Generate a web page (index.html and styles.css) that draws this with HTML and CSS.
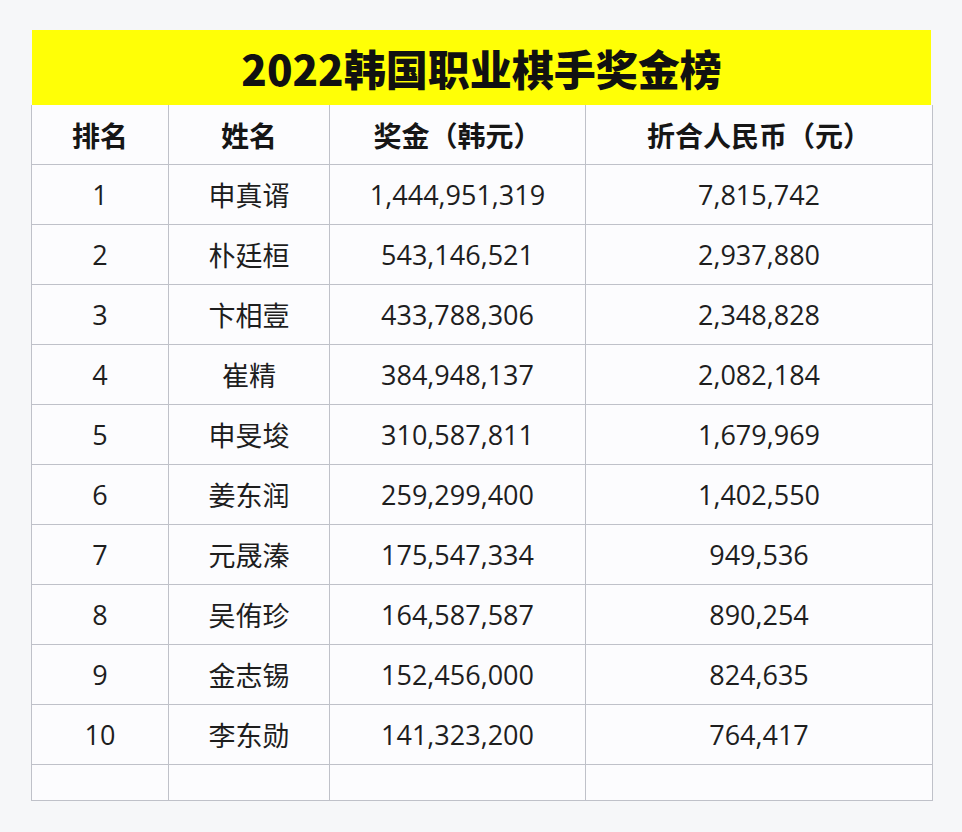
FILE: index.html
```html
<!DOCTYPE html>
<html lang="zh-CN">
<head>
<meta charset="utf-8">
<title>2022韩国职业棋手奖金榜</title>
<link rel="stylesheet" href="styles.css">
</head>
<body>
<div class="page">
  <div class="board">
    <div class="title">2022韩国职业棋手奖金榜</div>
    <table class="rank">
      <colgroup>
        <col class="c1"><col class="c2"><col class="c3"><col class="c4">
      </colgroup>
      <thead>
        <tr><th>排名</th><th>姓名</th><th>奖金（韩元）</th><th>折合人民币（元）</th></tr>
      </thead>
      <tbody>
        <tr><td>1</td><td>申真谞</td><td>1,444,951,319</td><td>7,815,742</td></tr>
        <tr><td>2</td><td>朴廷桓</td><td>543,146,521</td><td>2,937,880</td></tr>
        <tr><td>3</td><td>卞相壹</td><td>433,788,306</td><td>2,348,828</td></tr>
        <tr><td>4</td><td>崔精</td><td>384,948,137</td><td>2,082,184</td></tr>
        <tr><td>5</td><td>申旻埈</td><td>310,587,811</td><td>1,679,969</td></tr>
        <tr><td>6</td><td>姜东润</td><td>259,299,400</td><td>1,402,550</td></tr>
        <tr><td>7</td><td>元晟溱</td><td>175,547,334</td><td>949,536</td></tr>
        <tr><td>8</td><td>吴侑珍</td><td>164,587,587</td><td>890,254</td></tr>
        <tr><td>9</td><td>金志锡</td><td>152,456,000</td><td>824,635</td></tr>
        <tr><td>10</td><td>李东勋</td><td>141,323,200</td><td>764,417</td></tr>
        <tr class="empty"><td></td><td></td><td></td><td></td></tr>
      </tbody>
    </table>
  </div>
</div>
</body>
</html>
```

FILE: styles.css
```css
html, body {
  margin: 0;
  padding: 0;
  background: #f6f7f9;
}

.page {
  width: 962px;
  height: 832px;
  padding: 30px 0 0 31px;
  box-sizing: border-box;
  font-family: "Open Sans", "Noto Sans CJK SC", sans-serif;
  color: #1c1c1c;
}

.board {
  width: 901px;
}

.title {
  height: 75px;
  margin-left: 1px;
  margin-right: 1px;
  background: #ffff06;
  display: flex;
  align-items: center;
  justify-content: center;
  font-family: "Noto Sans CJK SC", sans-serif;
  font-weight: 900;
  font-size: 42px;
  color: #111;
}

.rank {
  width: 901px;
  border-collapse: collapse;
  table-layout: fixed;
  background: #fcfcfe;
}

.c1 { width: 137px; }
.c2 { width: 161px; }
.c3 { width: 256px; }
.c4 { width: 347px; }

.rank th,
.rank td {
  border: 1px solid #bfc1c9;
  text-align: center;
  vertical-align: middle;
  padding: 0;
}

.rank thead th {
  border-top: none;
  height: 59px;
  font-family: "Noto Sans CJK SC", sans-serif;
  font-weight: 700;
  font-size: 28px;
  color: #161616;
}

.rank tbody td {
  height: 59px;
  font-size: 27px;
  font-weight: 400;
  color: #1e1e1e;
}

.rank tbody tr.empty td {
  height: 35px;
}
```
